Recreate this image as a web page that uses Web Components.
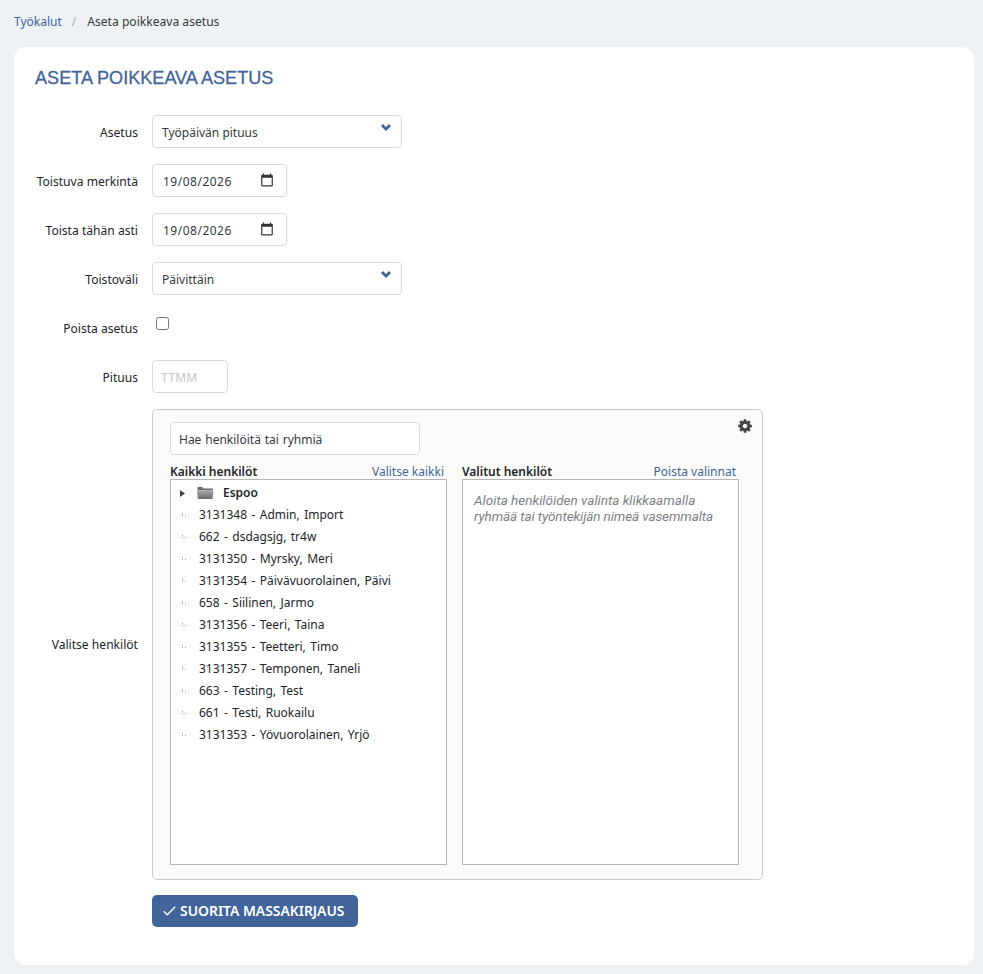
<!DOCTYPE html>
<html lang="fi">
<head>
<meta charset="utf-8">
<title>Aseta poikkeava asetus</title>
<style>
    html, body { margin: 0; padding: 0; }
    body {
        background: #eef2f5;
        color: #212529;
        font: 13px/20px "Noto Sans", sans-serif;
    }
</style>
</head>
<body>
<x-page>
    <x-breadcrumb slot="crumbs" current="Aseta poikkeava asetus"><a>Työkalut</a></x-breadcrumb>
    <x-card heading="Aseta poikkeava asetus">
        <x-form-row label="Asetus"><x-select value="Työpäivän pituus"></x-select></x-form-row>
        <x-form-row label="Toistuva merkintä"><x-date value="19/08/2026"></x-date></x-form-row>
        <x-form-row label="Toista tähän asti"><x-date value="19/08/2026"></x-date></x-form-row>
        <x-form-row label="Toistoväli"><x-select value="Päivittäin"></x-select></x-form-row>
        <x-form-row label="Poista asetus" kind="check"><input type="checkbox" style="margin:0;width:13px;height:13px;display:block"></x-form-row>
        <x-form-row label="Pituus"><x-text-field placeholder="TTMM" style="width:76px"></x-text-field></x-form-row>
        <x-form-row label="Valitse henkilöt" kind="center">
            <x-person-picker>
                <x-person-list slot="all" heading="Kaikki henkilöt" action="Valitse kaikki">
                    <x-tree-folder>Espoo</x-tree-folder>
                    <x-tree-item>3131348 - Admin, Import</x-tree-item>
                    <x-tree-item>662 - dsdagsjg, tr4w</x-tree-item>
                    <x-tree-item>3131350 - Myrsky, Meri</x-tree-item>
                    <x-tree-item>3131354 - Päivävuorolainen, Päivi</x-tree-item>
                    <x-tree-item>658 - Siilinen, Jarmo</x-tree-item>
                    <x-tree-item>3131356 - Teeri, Taina</x-tree-item>
                    <x-tree-item>3131355 - Teetteri, Timo</x-tree-item>
                    <x-tree-item>3131357 - Temponen, Taneli</x-tree-item>
                    <x-tree-item>663 - Testing, Test</x-tree-item>
                    <x-tree-item>661 - Testi, Ruokailu</x-tree-item>
                    <x-tree-item>3131353 - Yövuorolainen, Yrjö</x-tree-item>
                </x-person-list>
                <x-person-list slot="picked" heading="Valitut henkilöt" action="Poista valinnat">
                    <x-hint first="Aloita henkilöiden valinta klikkaamalla" second="ryhmää tai työntekijän nimeä vasemmalta"></x-hint>
                </x-person-list>
            </x-person-picker>
        </x-form-row>
        <x-form-row label="" kind="submit"><x-button>Suorita massakirjaus</x-button></x-form-row>
    </x-card>
</x-page>
<script>
function define(name, css, html) {
    customElements.define(name, class extends HTMLElement {
        constructor() {
            super();
            this.attachShadow({ mode: 'open' });
        }
        connectedCallback() {
            const attr = (k) => this.getAttribute(k) || '';
            this.shadowRoot.innerHTML = `<style>${css}</style>${html(attr)}`;
        }
    });
}

const chevron = `<svg width="10" height="7" viewBox="0 0 10 7"><path d="M0 2 2 0 5 3 8 0 10 2 5 7z" fill="#41659a"/></svg>`;
const calendar = `<svg width="14" height="14" viewBox="0 0 24 24"><path fill="#333" d="M20 3h-1V1h-2v2H7V1H5v2H4c-1.1 0-2 .9-2 2v16c0 1.1.9 2 2 2h16c1.1 0 2-.9 2-2V5c0-1.1-.9-2-2-2zm0 18H4V8h16v13z"/></svg>`;
const gear = `<svg width="16" height="16" viewBox="0 0 1792 1792"><path fill="#444" d="M1152 896q0-106-75-181t-181-75-181 75-75 181 75 181 181 75 181-75 75-181zm512-109v222q0 12-8 23t-20 13l-185 28q-19 54-39 91 35 50 107 138 10 12 10 25t-9 23q-27 37-99 108t-94 71q-12 0-26-9l-138-108q-44 23-91 38-16 136-29 186-7 28-36 28h-222q-14 0-24.500-8.500t-11.500-21.500l-28-184q-49-16-90-37l-141 107q-10 9-25 9-14 0-25-11-126-114-165-168-7-10-7-23 0-12 8-23 15-21 51-66.500t54-70.500q-27-50-41-99l-183-27q-13-2-21-12.500t-8-23.500v-222q0-12 8-23t19-13l186-28q14-46 39-92-40-57-107-138-10-12-10-24 0-10 9-23 26-36 98.500-107.500t94.500-71.500q13 0 26 10l138 107q44-23 91-38 16-136 29-186 7-28 36-28h222q14 0 24.500 8.500t11.500 21.500l28 184q49 16 90 37l142-107q9-9 24-9 13 0 25 10 129 119 165 170 7 8 7 22 0 12-8 23-15 21-51 66.500t-54 70.500q26 50 41 98l183 28q13 2 21 12.500t8 23.500z"/></svg>`;
const folder = `<svg class="folder" width="17" height="12" viewBox="0 0 17 12">
    <defs><linearGradient id="fg" x1="0" y1="0" x2="0" y2="1"><stop offset="0" stop-color="#a3a3a3"/><stop offset="1" stop-color="#6c6c6c"/></linearGradient></defs>
    <path fill="#686868" d="M.5 1C.5.4.9 0 1.500 0h3.700l1.300 1.500h8.500c.6 0 1 .4 1 1V3.500H.5z"/>
    <path fill="url(#fg)" d="M0 4h16.500l-.8 7.200c-.1.5-.4.8-.9.8H1.700c-.5 0-.8-.3-.9-.8z"/></svg>`;
const fieldCss = `
    :host { display: block; box-sizing: border-box; height: 33px; background: #fff;
        border: 1px solid #d9dbde; border-radius: 4px; }`;

define('x-page', `
    :host { display: block; padding: 12px 9px 9px 14px; }
`, () => `<slot name="crumbs"></slot><slot></slot>`);

define('x-breadcrumb', `
    :host { display: flex; height: 20px; margin-bottom: 15px; align-items: center; font-size: 12px; }
    ::slotted(a) { color: #41659a; }
    .sep { color: #a4a9af; padding: 0 10px 0 10px; }
    .cur { color: #343a40; font-size: 12.1px; padding-left: 1px; }
`, (a) => `<slot></slot><span class="sep">/</span><span class="cur">${a('current')}</span>`);

define('x-card', `
    :host { display: block; box-sizing: border-box; height: 918px; background: #fff; border-radius: 12px;
        padding: 20px 21px; }
    h1 { margin: 0 0 25px; font: 400 18.1px/23px "Liberation Sans", sans-serif; color: #41659a;
        -webkit-text-stroke: .3px #41659a; text-transform: uppercase; }
    .rows { display: flex; flex-direction: column; gap: 16px; }
`, (a) => `<h1>${a('heading')}</h1><div class="rows"><slot></slot></div>`);

define('x-form-row', `
    :host { display: grid; grid-template-columns: 103px 1fr; column-gap: 14px; align-items: center; }
    .label { text-align: right; color: #212529; font-size: 12.1px; white-space: nowrap; padding-top: 2px; }
    :host([kind="check"]) { align-items: start; height: 17px; padding: 6px 0 10px; }
    :host([kind="check"]) .ctl { padding-left: 4px; }
    :host([kind="check"]) .label { padding-top: 1px; margin-top: 1px; }
    :host([kind="center"]) .label { padding-top: 0; }
    :host([kind="submit"]) { margin-top: -1px; }
`, (a) => `<div class="label">${a('label')}</div><div class="ctl"><slot></slot></div>`);

define('x-select', fieldCss + `
    :host { width: 250px; display: flex; padding: 0 10px 0 9px; align-items: center; justify-content: space-between;
        font-size: 12px; color: #343a40; }
    span { padding-top: 2px; }
    svg { margin: -8px 0 0; }
`, (a) => `<span>${a('value')}</span>${chevron}`);

define('x-date', fieldCss + `
    :host { width: 135px; display: flex; padding: 0 12px 0 10px; align-items: center; justify-content: space-between;
        font-size: 12px; letter-spacing: .5px; color: #343a40; }
    span { padding-top: 2px; }
    svg { margin: -1px 0 0; }
`, (a) => `<span>${a('value')}</span>${calendar}`);

define('x-text-field', fieldCss + `
    input { box-sizing: border-box; width: 100%; height: 100%; border: 0; background: none; outline: 0;
        padding: 1px 8px 0; font: 12px "Noto Sans", sans-serif; color: #343a40; word-spacing: .75px; }
    input::placeholder { color: #c4c6c9; opacity: 1; letter-spacing: .3px; }
`, (a) => `<input placeholder="${a('placeholder')}" value="${a('value')}">`);

define('x-person-picker', `
    :host { display: block; box-sizing: border-box; width: 611px; height: 471px; background: #fbfbfb;
        border: 1px solid #c9cbcd; border-radius: 5px; padding: 12px 23px 14px 17px; position: relative; }
    .gear { position: absolute; top: 8px; right: 9px; }
    x-text-field { width: 250px; margin-bottom: 8px; }
    .cols { display: grid; grid-template-columns: 277px 277px; column-gap: 15px; }
`, () => `<div class="gear">${gear}</div><x-text-field value="Hae henkilöitä tai ryhmiä"></x-text-field>
    <div class="cols"><slot name="all"></slot><slot name="picked"></slot></div>`);

define('x-person-list', `
    :host { display: block; }
    .head { display: flex; justify-content: space-between; height: 16px; line-height: 18px; font-size: 12px;
        padding-right: 3px; }
    b { font-weight: 600; color: #212529; }
    a { color: #41659a; }
    .box { box-sizing: border-box; height: 386px; background: #fff; border: 1px solid #b4b6b8; padding: 2px 0 0; }
`, (a) => `<div class="head"><b>${a('heading')}</b><a>${a('action')}</a></div><div class="box"><slot></slot></div>`);

define('x-tree-item', `
    :host { display: flex; height: 22px; align-items: center; font-size: 12px; color: #212529; white-space: nowrap;
        word-spacing: 1.3px; }
    svg { margin: 0 12px 0 11px; flex: none; }
`, () => `<svg width="5" height="4" viewBox="0 0 5 4"><path fill="#999" d="M0 0h1v1H0zM0 2h1v1H0zM3 2h1v1H3z"/></svg><slot></slot>`);

define('x-tree-folder', `
    :host { display: flex; height: 22px; align-items: center; font-size: 12px; font-weight: 600; color: #212529; }
    .arrow { margin: 0 12px 0 9px; }
    .folder { margin-right: 9px; }
`, () => `<svg class="arrow" width="5" height="7" viewBox="0 0 5 7"><path fill="#444" d="M0 0l5 3.500L0 7z"/></svg>${folder}<slot></slot>`);

define('x-hint', `
    :host { display: block; padding: 10px 0 0 11px; font: italic 13.5px/16px Roboto, sans-serif;
        color: #7c7f83; white-space: nowrap; }
    div:first-child { letter-spacing: .2px; }
    div:last-child { letter-spacing: -.1px; }
`, (a) => `<div>${a('first')}</div><div>${a('second')}</div>`);

define('x-button', `
    :host { display: inline-flex; box-sizing: border-box; height: 32px; align-items: center; gap: 4px; padding: 0 14px 0 11px;
        background: #41659a; color: #fff; border-radius: 5px; font-size: 13.9px; font-weight: 600; text-transform: uppercase; }
`, () => `<svg width="13" height="10" viewBox="0 0 13 10"><path d="M.8 5.300 4.300 8.800 12.200 .8" fill="none" stroke="#fff" stroke-width="1.400"/></svg><slot></slot>`);
</script>
</body>
</html>
